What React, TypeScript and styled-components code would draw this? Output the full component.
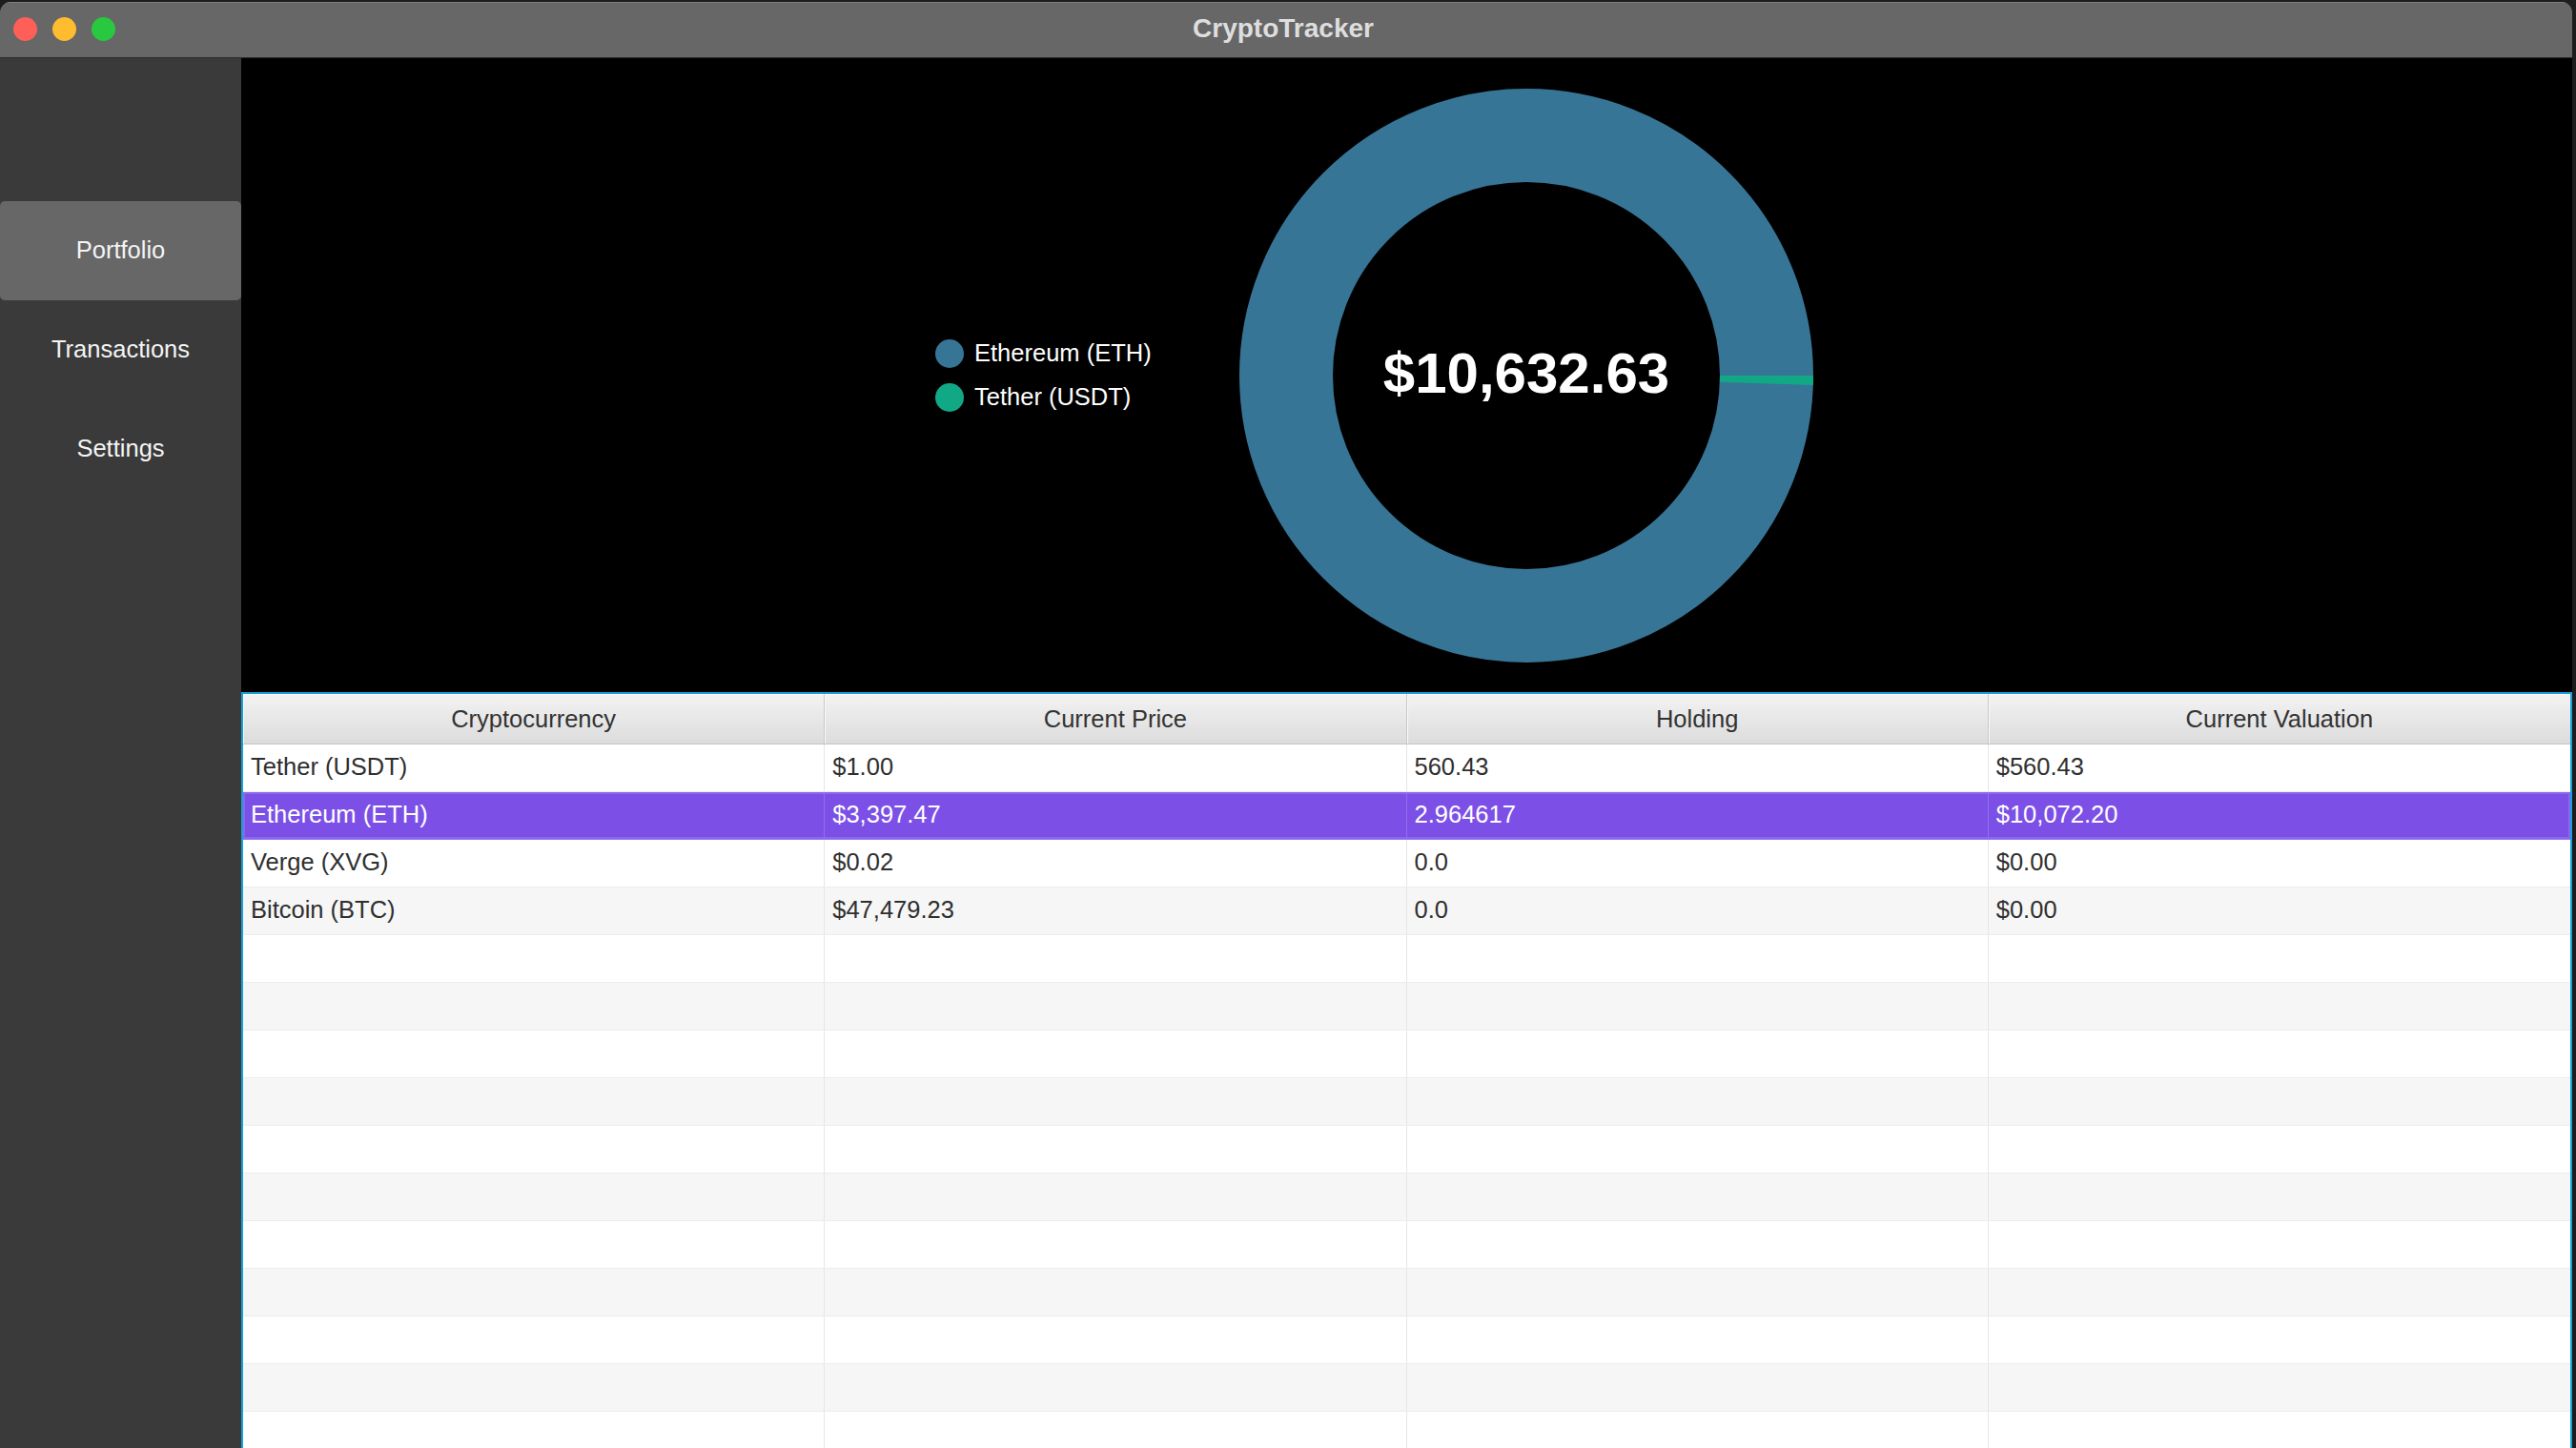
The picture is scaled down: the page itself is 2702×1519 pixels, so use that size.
import React from "react";
import styled, { createGlobalStyle } from "styled-components";

const GlobalStyle = createGlobalStyle`
  html, body {
    margin: 0;
    padding: 0;
    background: #1c1d1f;
    overflow: hidden;
  }
  body {
    font-family: "Liberation Sans", Arial, sans-serif;
  }
  #root {
    height: 100vh;
  }
`;

const Screen = styled.div`
  height: 100vh;
  padding: 2px 4px 0 0;
  box-sizing: border-box;
  display: flex;
`;

const Window = styled.div`
  flex: 1;
  display: flex;
  flex-direction: column;
  border-radius: 11px 11px 0 0;
  overflow: hidden;
  background: #000;
`;

const TitleBar = styled.div`
  height: 58px;
  flex: none;
  background: #676767;
  border-bottom: 1px solid #2c2c2c;
  box-shadow: inset 0 1px 0 #7e7e7e;
  display: flex;
  align-items: center;
  position: relative;
`;

const Lights = styled.div`
  display: flex;
  gap: 16px;
  padding-left: 14px;
  margin-top: -1px;
`;

const Light = styled.span<{ $color: string }>`
  width: 25px;
  height: 25px;
  border-radius: 50%;
  background: ${(p) => p.$color};
  display: block;
`;

const Title = styled.div`
  position: absolute;
  left: 0;
  right: 0;
  text-align: center;
  font-size: 28px;
  font-weight: 700;
  color: #dedede;
  pointer-events: none;
  margin-top: -2px;
  padding-right: 6px;
`;

const Body = styled.div`
  flex: 1;
  display: flex;
  min-height: 0;
`;

const Sidebar = styled.nav`
  width: 253px;
  flex: none;
  background: #3a3a3a;
  padding-top: 150px;
  display: flex;
  flex-direction: column;
`;

const NavItem = styled.div<{ $active?: boolean }>`
  height: 104px;
  display: flex;
  align-items: center;
  justify-content: center;
  font-size: 25.5px;
  color: #f4f4f4;
  border-radius: 5px;
  background: ${(p) => (p.$active ? "#676767" : "transparent")};
  padding-bottom: 2px;
  box-sizing: border-box;
`;

const Main = styled.main`
  flex: 1;
  display: flex;
  flex-direction: column;
  min-width: 0;
`;

const ChartArea = styled.section`
  height: 665px;
  flex: none;
  background: #000;
  display: flex;
  align-items: center;
  padding-left: 728px;
  box-sizing: border-box;
`;

const Legend = styled.ul`
  list-style: none;
  margin: 0;
  padding: 0;
  width: 318px;
  display: flex;
  flex-direction: column;
  gap: 16px;
`;

const LegendItem = styled.li`
  display: flex;
  align-items: center;
  gap: 11px;
  font-size: 25.5px;
  color: #ffffff;
  height: 30px;
`;

const Dot = styled.span<{ $color: string }>`
  width: 30px;
  height: 30px;
  border-radius: 50%;
  background: ${(p) => p.$color};
  flex: none;
`;

const DonutWrap = styled.div`
  position: relative;
  width: 604px;
  height: 604px;
  flex: none;
`;

const Total = styled.div`
  position: absolute;
  inset: 0;
  display: flex;
  align-items: center;
  justify-content: center;
  font-size: 60px;
  font-weight: 700;
  color: #ffffff;
  padding-bottom: 4px;
`;

const TableWrap = styled.section`
  flex: 1;
  background: #ffffff;
  border: 2px solid #19a0d8;
  border-bottom: none;
  display: flex;
  flex-direction: column;
  overflow: hidden;
`;

const HeaderRow = styled.div`
  height: 53px;
  flex: none;
  display: grid;
  grid-template-columns: repeat(4, 1fr);
  background: linear-gradient(#f3f3f3, #dcdcdc);
  border-bottom: 1px solid #c4c4c4;
  box-sizing: border-box;
`;

const HeaderCell = styled.div`
  display: flex;
  align-items: center;
  justify-content: center;
  font-size: 25.5px;
  color: #333333;
  border-right: 1px solid #c8c8c8;
  box-shadow: inset 1px 1px 0 #fafafa;
  &:last-child {
    border-right: none;
  }
`;

const Row = styled.div<{ $odd: boolean; $selected?: boolean }>`
  height: 50px;
  flex: none;
  display: grid;
  grid-template-columns: repeat(4, 1fr);
  box-sizing: border-box;
  background: ${(p) => (p.$selected ? "#7c50e6" : p.$odd ? "#f6f6f6" : "#ffffff")};
  border-bottom: 1px solid ${(p) => (p.$selected ? "#9274ee" : "#ececec")};
  box-shadow: ${(p) => (p.$selected ? "inset 0 0 0 2px #8a67ec" : "none")};
`;

const Cell = styled.div<{ $selected?: boolean }>`
  display: flex;
  align-items: center;
  padding-left: 8px;
  padding-bottom: 2px;
  font-size: 25.5px;
  color: ${(p) => (p.$selected ? "#ffffff" : "#2f2f2f")};
  border-right: 1px solid ${(p) => (p.$selected ? "#8f6fee" : "#e6e6e6")};
  &:last-child {
    border-right: none;
  }
`;

const ETH = "#377596";
const USDT = "#11a886";

const rows = [
  ["Tether (USDT)", "$1.00", "560.43", "$560.43"],
  ["Ethereum (ETH)", "$3,397.47", "2.964617", "$10,072.20"],
  ["Verge (XVG)", "$0.02", "0.0", "$0.00"],
  ["Bitcoin (BTC)", "$47,479.23", "0.0", "$0.00"],
];

const TOTAL_ROWS = 15;

function Donut() {
  const c = 302;
  const ro = 301;
  const ri = 203;
  const a = (1.9 * Math.PI) / 180;
  const wedge = `M ${c + ri} ${c} L ${c + ro} ${c} A ${ro} ${ro} 0 0 1 ${c + ro * Math.cos(a)} ${
    c + ro * Math.sin(a)
  } L ${c + ri * Math.cos(a)} ${c + ri * Math.sin(a)} A ${ri} ${ri} 0 0 0 ${c + ri} ${c} Z`;
  return (
    <DonutWrap>
      <svg width="604" height="604" viewBox="0 0 604 604">
        <circle cx={c} cy={c} r={(ro + ri) / 2} fill="none" stroke={ETH} strokeWidth={ro - ri} />
        <path d={wedge} fill={USDT} />
      </svg>
      <Total>$10,632.63</Total>
    </DonutWrap>
  );
}

export default function App() {
  return (
    <>
      <GlobalStyle />
      <Screen>
        <Window>
          <TitleBar>
            <Lights>
              <Light $color="#fe5f57" />
              <Light $color="#febc2e" />
              <Light $color="#28c840" />
            </Lights>
            <Title>CryptoTracker</Title>
          </TitleBar>
          <Body>
            <Sidebar>
              <NavItem $active>Portfolio</NavItem>
              <NavItem>Transactions</NavItem>
              <NavItem>Settings</NavItem>
            </Sidebar>
            <Main>
              <ChartArea>
                <Legend>
                  <LegendItem>
                    <Dot $color={ETH} />
                    Ethereum (ETH)
                  </LegendItem>
                  <LegendItem>
                    <Dot $color={USDT} />
                    Tether (USDT)
                  </LegendItem>
                </Legend>
                <Donut />
              </ChartArea>
              <TableWrap>
                <HeaderRow>
                  <HeaderCell>Cryptocurrency</HeaderCell>
                  <HeaderCell>Current Price</HeaderCell>
                  <HeaderCell>Holding</HeaderCell>
                  <HeaderCell>Current Valuation</HeaderCell>
                </HeaderRow>
                {Array.from({ length: TOTAL_ROWS }).map((_, i) => {
                  const data = rows[i];
                  const selected = i === 1;
                  return (
                    <Row key={i} $odd={i % 2 === 1} $selected={selected}>
                      {[0, 1, 2, 3].map((j) => (
                        <Cell key={j} $selected={selected}>
                          {data ? data[j] : ""}
                        </Cell>
                      ))}
                    </Row>
                  );
                })}
              </TableWrap>
            </Main>
          </Body>
        </Window>
      </Screen>
    </>
  );
}
